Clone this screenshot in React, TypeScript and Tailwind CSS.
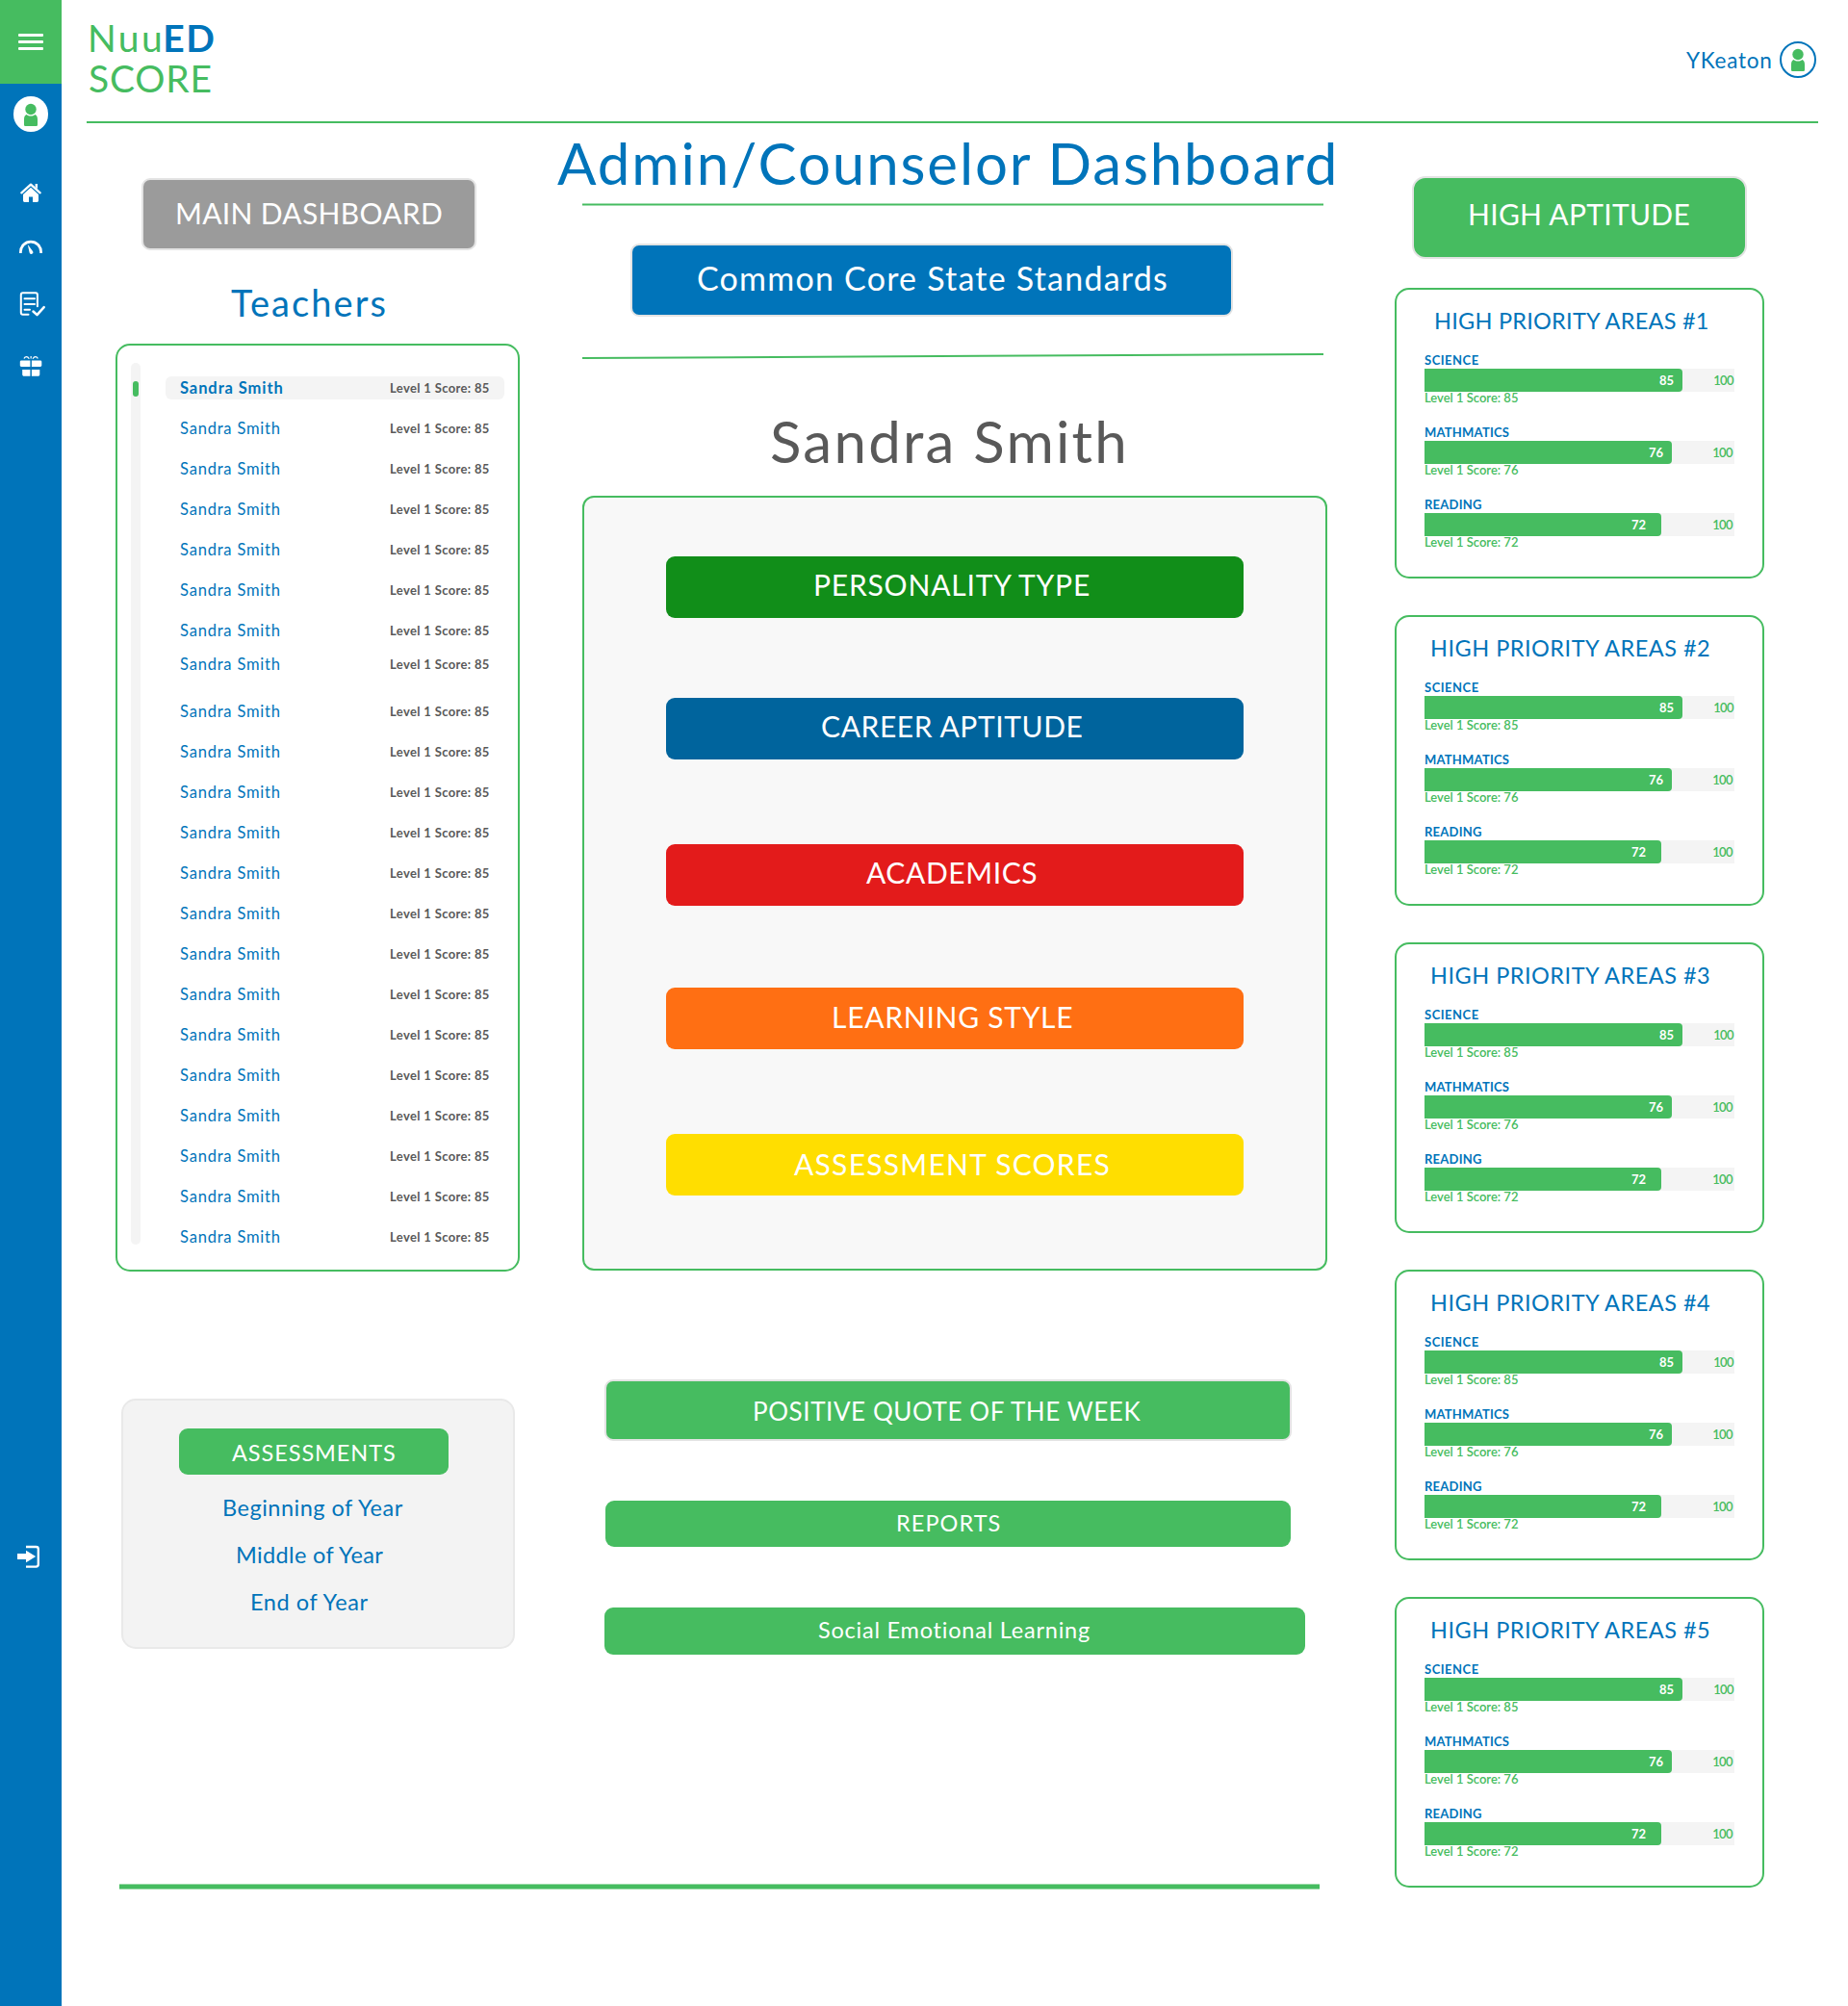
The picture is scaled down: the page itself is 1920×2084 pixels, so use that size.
import React from 'react';

const areas = [
  {
    label: 'SCIENCE',
    labelClass: 'tracking-[0.5px]',
    score: 85,
    fillClass: 'w-[268px] pr-[9px]',
    maxClass: 'pr-[1px]',
  },
  {
    label: 'MATHMATICS',
    labelClass: 'tracking-[0.22px]',
    score: 76,
    fillClass: 'w-[257px] pr-[9px]',
    maxClass: 'pr-[2px]',
  },
  {
    label: 'READING',
    labelClass: 'tracking-[0.25px]',
    score: 72,
    fillClass: 'w-[246px] pr-[16px]',
    maxClass: 'pr-[2px]',
  },
];

const reports = [
  { label: 'PERSONALITY TYPE', className: 'mt-[61px] bg-[#118e19] pl-[153px] leading-[58px] tracking-[0.8px]' },
  { label: 'CAREER APTITUDE', className: 'mt-[83px] bg-[#00649d] pl-[161px] leading-[58px] tracking-[0.59px]' },
  { label: 'ACADEMICS', className: 'mt-[88px] bg-[#e31b1b] pl-[208px] leading-[58px] tracking-[0.6px]' },
  { label: 'LEARNING STYLE', className: 'mt-[85px] bg-[#ff6f13] pl-[172px] leading-[60px] tracking-[0.73px]' },
  { label: 'ASSESSMENT SCORES', className: 'mt-[88px] bg-[#ffde00] pl-[133px] leading-[62px] tracking-[1.26px]' },
];

function Person({ className }: { className: string }) {
  return (
    <svg viewBox="0 0 38 38" className={className}>
      <circle cx="19" cy="13.5" r="5.7" />
      <path d="M14.6 19C12.8 19.6 12 21.6 12 24v5.4c0 1.1.6 1.7 1.7 1.7h10.6c1.1 0 1.7-.6 1.7-1.7V24c0-2.4-.8-4.4-2.6-5-1.3 1.1-2.8 1.6-4.4 1.6s-3.100-.5-4.400-1.6Z" />
    </svg>
  );
}

function Sidebar() {
  return (
    <aside className="flex w-16 shrink-0 flex-col items-center bg-[#0074ba] text-white">
      <button className="flex h-[87px] w-16 shrink-0 flex-col items-center gap-1 bg-[#46bc60] pt-[35px]">
        <span className="h-[3px] w-[26px] rounded-[1px] bg-white" />
        <span className="h-[3px] w-[26px] rounded-[1px] bg-white" />
        <span className="h-[3px] w-[26px] rounded-[1px] bg-white" />
      </button>
      <div className="mt-[13px] flex h-[37px] w-9 shrink-0 items-center justify-center rounded-full bg-white">
        <Person className="size-[38px] shrink-0 fill-[#46bc60]" />
      </div>
      {/* home */}
      <svg viewBox="0 0 24 22" className="mt-[52px] h-[22px] w-6 shrink-0 fill-current">
        <path d="M16.600 2H19v5.200l-2.400-2.200Z" />
        <path d="M2.300 11.300 12 2.600l9.700 8.700" fill="none" stroke="currentColor" strokeWidth="2.300" strokeLinecap="round" strokeLinejoin="round" />
        <path d="M12 5.700 4 12.900v6.300c0 1.100.7 1.800 1.800 1.800h4.200v-5.500h4V21h4.200c1.100 0 1.800-.7 1.800-1.800v-6.300Z" />
      </svg>
      {/* gauge */}
      <svg viewBox="0 0 24 15" className="mt-[38px] h-[15px] w-6 shrink-0 fill-current">
        <path d="M1.400 13.900v-1.200C1.400 6.800 6.100 2.200 12 2.200s10.600 4.600 10.600 10.500v1.200" fill="none" stroke="currentColor" strokeWidth="2.700" />
        <path d="M8.800 5.100 14 11.900a1.900 1.900 0 1 1-3.500 1.200Z" />
      </svg>
      {/* checklist */}
      <svg viewBox="0 0 28 26" className="ml-[3px] mt-[39px] h-[26px] w-7 shrink-0" fill="none" stroke="currentColor" strokeWidth="2" strokeLinecap="round" strokeLinejoin="round">
        <path d="M9.500 23.700H3.700c-1.300 0-1.900-.7-1.900-1.900V3.200c0-1.200.7-1.900 1.900-1.900H17c1.200 0 1.900.7 1.900 1.900v12" />
        <path d="M5.500 7.200h10.500M5.500 13h10.500M5.500 18.700h5.500" />
        <path d="m14.500 20.500 4 3.700 7.200-8" strokeWidth="2.500" />
      </svg>
      {/* gift */}
      <svg viewBox="0 0 24 22" className="mt-[40px] h-[22px] w-6 shrink-0 fill-current">
        <path d="M2.200 5.500h9.200V12H2.200C1.300 12 .8 11.500.8 10.600V7c0-1 .5-1.500 1.400-1.500ZM12.900 5.500h9c.9 0 1.400.5 1.400 1.500v3.600c0 .9-.5 1.400-1.400 1.400h-9ZM3.200 15h8.200v6.800H5.100c-1.200 0-1.900-.7-1.900-1.800ZM12.900 15h8.400v5c0 1.100-.7 1.800-1.900 1.800h-6.500Z" />
        <path d="M5 3.500C5.600 1.200 8.600.6 10.300 3.700M19.300 3.500c-.6-2.300-3.600-2.900-5.300.2M12.150 1v2.500" fill="none" stroke="currentColor" strokeWidth="1.200" />
      </svg>
      {/* log out */}
      <svg viewBox="0 0 24 24" className="mr-[4px] mt-[1214px] h-6 w-6 shrink-0 fill-current">
        <path d="M0 9h9V5.700L19.200 12 9 18.200V15H0Z" />
        <path d="M9 2h10.500c1.400 0 2.300.8 2.300 2.200v16.100c0 1.400-.9 2.300-2.300 2.300H9" fill="none" stroke="currentColor" strokeWidth="2.300" />
      </svg>
    </aside>
  );
}

function Header() {
  return (
    <header className="ml-[26px] mr-[31px] flex h-[128px] shrink-0 items-start justify-between border-b-2 border-[#46bc60]">
      <div className="mt-[18px] text-[39px] leading-[42px] text-[#46bc60]">
        <div className="flex pl-px">
          <span className="tracking-[2.42px]">Nuu</span>
          <span className="-ml-[2px] font-bold tracking-[1.57px] text-[#0074ba]">ED</span>
        </div>
        <div className="pl-[2px] tracking-[0.8px]">SCORE</div>
      </div>
      <div className="mr-[2px] mt-[42px] flex text-[#0074ba]">
        <span className="w-[97px] text-[22.5px] leading-[42px] tracking-[0.75px]">YKeaton</span>
        <span className="mt-px flex size-[38px] items-center justify-center rounded-full border-2 border-[#0074ba]">
          <Person className="size-[38px] shrink-0 fill-[#46bc60]" />
        </span>
      </div>
    </header>
  );
}

function Teachers() {
  return (
    <section className="flex h-[964px] rounded-[15px] border-2 border-[#46bc60]">
      <div className="ml-[14px] mt-[18px] h-[916px] w-[10px] rounded-[5px] bg-[#f4f4f4]">
        <div className="ml-[2px] mt-[19px] h-4 w-[6px] rounded-[3px] bg-[#46bc60]" />
      </div>
      <ul className="ml-[26px] mt-[32px] flex w-[352px] flex-col gap-[18px]">
        {Array.from({ length: 22 }, (_, i) => (
          <li
            key={i}
            className={
              i === 0
                ? 'flex h-6 rounded-md bg-[#f4f4f4]'
                : i === 7
                  ? '-mt-[7px] mb-[7px] flex h-6'
                  : 'flex h-6'
            }
          >
            <span
              className={
                i === 0
                  ? 'ml-[15px] w-[218px] text-[16.5px] font-bold leading-[25px] tracking-[0.91px] text-[#0074ba]'
                  : 'ml-[15px] w-[218px] text-[16.5px] leading-[25px] tracking-[0.8px] text-[#0074ba]'
              }
            >
              Sandra Smith
            </span>
            <span className="text-[13px] font-bold leading-6 tracking-[0.35px] text-[#595959]">Level 1 Score: 85</span>
          </li>
        ))}
      </ul>
    </section>
  );
}

function Assessments() {
  return (
    <section className="ml-[6px] mt-[132px] h-[260px] w-[409px] rounded-[15px] border-2 border-[#e9e9e9] bg-[#f3f3f3] text-[23.5px] text-[#0074ba]">
      <div className="ml-[58px] mt-[29px] h-12 w-[280px] rounded-[9px] bg-[#46bc60] pl-[55px] leading-[51px] tracking-[0.93px] text-white">
        ASSESSMENTS
      </div>
      <div className="mt-[9px] h-[49px] pl-[103px] leading-[50px] tracking-[0.5px]">Beginning of Year</div>
      <div className="h-[49px] pl-[117px] leading-[50px] tracking-[0.35px]">Middle of Year</div>
      <div className="h-[49px] pl-[132px] leading-[50px] tracking-[0.58px]">End of Year</div>
    </section>
  );
}

function PriorityCard({ index }: { index: number }) {
  return (
    <section className="h-[302px] shrink-0 rounded-[15px] border-2 border-[#46bc60]">
      <h3
        className={
          index === 1
            ? 'h-16 pl-[39px] text-[23.5px] leading-[65px] tracking-[0.25px] text-[#0074ba]'
            : 'h-16 pl-[35px] text-[23.5px] leading-[65px] tracking-[0.5px] text-[#0074ba]'
        }
      >
        HIGH PRIORITY AREAS #{index}
      </h3>
      {areas.map((a) => (
        <div key={a.label} className="ml-[29px] h-[75px] w-[322px] text-[13px] text-[#46bc60]">
          <div className={`h-[18px] font-bold leading-[18px] text-[#0074ba] ${a.labelClass}`}>{a.label}</div>
          <div className="flex h-6 justify-between bg-[#f4f4f4] leading-6">
            <div className={`rounded-r-[4px] bg-[#46bc60] text-right font-bold text-white ${a.fillClass}`}>{a.score}</div>
            <div className={`font-semibold tracking-[-0.6px] ${a.maxClass}`}>100</div>
          </div>
          <div className="font-semibold leading-[13px]">Level 1 Score: {a.score}</div>
        </div>
      ))}
    </section>
  );
}

export default function App() {
  return (
    <div className="flex h-[2084px] w-[1920px] overflow-hidden whitespace-nowrap bg-white font-['Lato',sans-serif]">
      <Sidebar />
      <main className="flex flex-1 flex-col">
        <Header />
        <div className="flex">
          <div className="ml-[56px] w-[1329px]">
            <div className="flex h-[1829px]">
              <div className="w-[420px] shrink-0">
                <button className="ml-[27px] mt-[57px] block h-[75px] w-[348px] rounded-[9px] border-2 border-[#e3e3e3] bg-[#9b9b9b] pb-[3px] pl-[33px] text-left text-[30px] leading-[68px] tracking-[0.32px] text-white">
                  MAIN DASHBOARD
                </button>
                <h2 className="mt-[10px] h-[87px] pl-[120px] text-[38px] leading-[88px] tracking-[2.1px] text-[#0074ba]">Teachers</h2>
                <Teachers />
                <Assessments />
              </div>
              <div className="ml-[39px] w-[812px] shrink-0">
                <h1 className="h-[83px] text-[60px] leading-[82px] tracking-[1.87px] text-[#0074ba]">Admin/Counselor Dashboard</h1>
                <div className="ml-[26px] h-[3px] w-[770px] border-y border-[#a2ddaf] bg-[#46bc60]" />
                <button className="ml-[76px] mt-[39px] block h-[76px] w-[626px] rounded-[9px] border-2 border-[#e3e3e3] bg-[#0074ba] pb-[5px] pl-[67px] text-left text-[34px] leading-[67px] tracking-[1.22px] text-white">
                  Common Core State Standards
                </button>
                <svg viewBox="0 0 770 8" className="ml-[26px] mt-[37px] block h-2 w-[770px]">
                  <line x1="0" y1="6" x2="770" y2="2" stroke="#46bc60" strokeWidth="2" />
                </svg>
                <h2 className="mt-[30px] h-[111px] pl-[221px] text-[60px] leading-[108px] tracking-[2.24px] text-[#595959]">Sandra Smith</h2>
                <section className="ml-[26px] flex h-[805px] w-[774px] flex-col rounded-[12px] border-2 border-[#46bc60] bg-[#f8f8f8]">
                  {reports.map((r) => (
                    <div key={r.label} className={`ml-[85px] h-16 w-[600px] shrink-0 rounded-[9px] text-[30px] text-white ${r.className}`}>
                      {r.label}
                    </div>
                  ))}
                </section>
                <div className="ml-[49px] mt-[113px] h-16 w-[714px] rounded-[9px] border-2 border-[#e3e3e3] bg-[#46bc60] pl-[152px] text-[26px] leading-[62px] tracking-[0.58px] text-white">
                  POSITIVE QUOTE OF THE WEEK
                </div>
                <div className="ml-[50px] mt-[62px] h-12 w-[712px] rounded-[9px] bg-[#46bc60] pl-[302px] text-[23.5px] leading-[47px] tracking-[1.05px] text-white">
                  REPORTS
                </div>
                <div className="ml-[49px] mt-[63px] h-[49px] w-[728px] rounded-[9px] bg-[#46bc60] pl-[222px] text-[23.5px] leading-[47px] tracking-[0.78px] text-white">
                  Social Emotional Learning
                </div>
              </div>
            </div>
            <div className="ml-[4px] h-[6px] w-[1247px] border-y border-[#9adba8] bg-[#46bc60]" />
          </div>
          <div className="flex w-[384px] flex-col">
            <button className="ml-[18px] mt-[55px] h-[86px] w-[348px] shrink-0 rounded-[14px] border-2 border-[#e3e3e3] bg-[#46bc60] pb-[7px] pl-[56px] text-left text-[30px] leading-[75px] tracking-[0.3px] text-white">
              HIGH APTITUDE
            </button>
            <div className="mt-[30px] flex flex-col gap-[38px]">
              {[1, 2, 3, 4, 5].map((n) => (
                <PriorityCard key={n} index={n} />
              ))}
            </div>
          </div>
        </div>
      </main>
    </div>
  );
}
